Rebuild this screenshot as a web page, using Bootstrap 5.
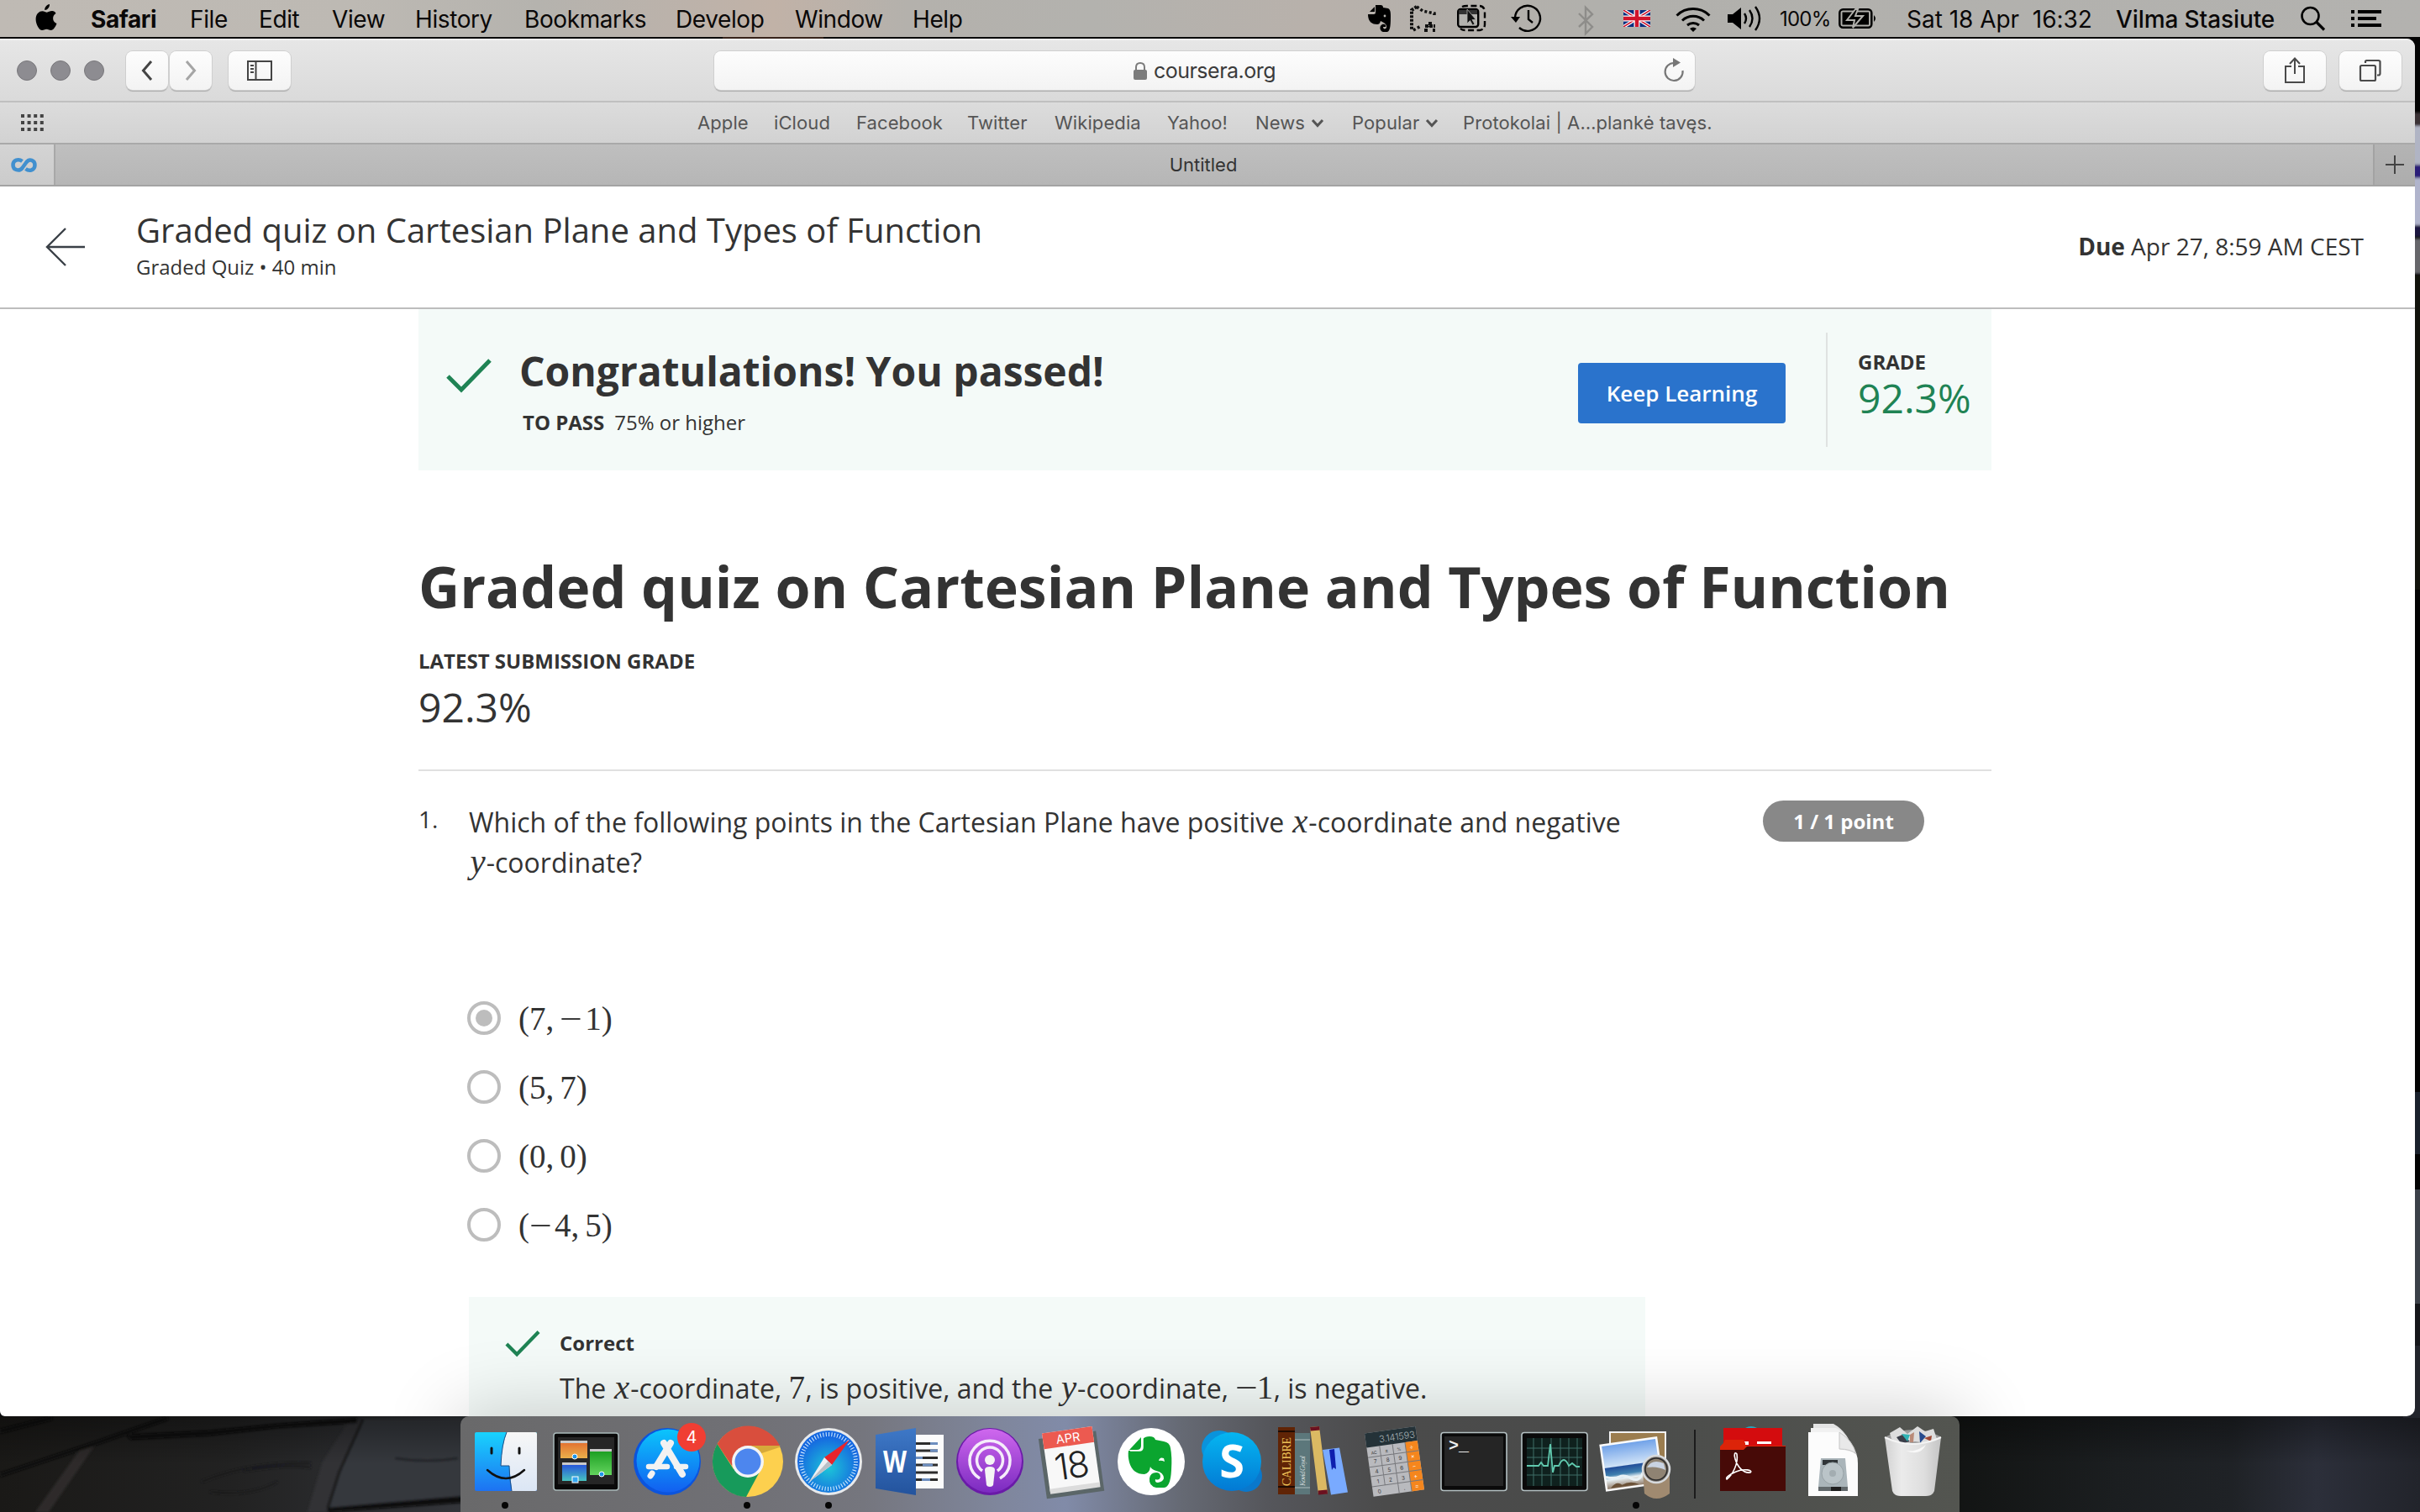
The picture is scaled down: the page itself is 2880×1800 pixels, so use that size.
<!DOCTYPE html>
<html lang="en">
<head>
<meta charset="utf-8">
<title>Graded quiz on Cartesian Plane and Types of Function</title>
<link href="https://cdn.jsdelivr.net/npm/bootstrap@5.3.0/dist/css/bootstrap.min.css" rel="stylesheet">
<style>
html,body{width:2880px;height:1800px;overflow:hidden}
body{background:#0c0d0f;font-family:"Open Sans",sans-serif;color:#333;position:relative;line-height:1.5}
svg{display:block;overflow:visible}
.sys{font-family:Inter,"Liberation Sans",sans-serif}
.wallpaper{position:absolute;inset:0;z-index:0}
/* menu bar */
.menubar{position:relative;z-index:2;height:44px;color:#0a0808;font-size:28px;line-height:46px;letter-spacing:-.4px;white-space:nowrap;
 background:linear-gradient(90deg,#bfbab4 0,#bdb9b3 420px,#b5b3ae 640px,#bcb2aa 820px,#c1b2a7 920px,#b4b1ac 1080px,#b3b2ae 1300px,#b8b1ab 1560px,#b1b0ac 1900px,#b3b2af 100%)}
.menus{display:grid;grid-template-columns:66px 118px 82px 87px 99px 130px 180px 142px 140px 100px;padding-left:42px}
.extras{display:grid;width:1252px;grid-template-columns:49px 57px 64px 80px 54px 62px 62px 62px 70px 81px 249px 220px 60px 82px}
.extras svg{margin-top:6px}
.clock{letter-spacing:-.02px}
.pct{font-size:24px;letter-spacing:-.8px}
/* browser window */
.win{position:relative;z-index:1;width:2874px;height:1640px;margin-top:2px;background:#fff;border-radius:0 10px 10px 6px;overflow:hidden}
.toolbar{height:76px;padding-left:20px;padding-right:16px;padding-top:2px;background:linear-gradient(#f4f4f4 0,#e6e6e6 3px,#dadada);border-bottom:2px solid #c0c0c0;position:relative}
.dot{width:24px;height:24px;border-radius:50%;background:#8d8c91;border:1px solid #78777b;margin-right:16px}
.tbtn{height:46px;border-radius:8px;background:linear-gradient(#fdfdfd,#f3f3f3);box-shadow:0 0 0 1px #cfcfcf,0 2px 1px #a9a9a9;display:flex;align-items:center;justify-content:center}
.urlbox{width:1167px;margin-left:504px;font-size:25px;color:#3b3b3b;position:relative;letter-spacing:-.5px;padding-top:2px}
.reload{position:absolute;right:13px;top:8px}
.favs{height:50px;background:linear-gradient(#dcdcdc,#d2d2d2);border-bottom:2px solid #a9a9a9;color:#555;font-size:22px;line-height:49px;white-space:nowrap}
.favgrid{display:grid;grid-template-columns:91px 98px 132px 104px 134px 105px 115px 132px 300px;margin-left:769px;letter-spacing:.1px}
.tabs{height:50px;background:linear-gradient(#bfbfbf,#b6b6b6);border-bottom:2px solid #a3a3a3;font-size:22px;color:#333}
.pin{width:66px;background:linear-gradient(#d4d4d4,#cbcbcb);border-right:2px solid #a8a8a8;padding-left:13px}
.newtab{width:50px;background:linear-gradient(#b4b4b4,#adadad);border-left:2px solid #a3a3a3}
.tabtitle{padding-right:26px}
/* page */
.qhead{height:146px;border-bottom:2px solid #bdbdbd;padding:0 61px 4px 54px}
.qtitle{font-size:40px;line-height:48px;margin:0;font-weight:400}
.t24{font-size:24px;line-height:34px}
.colmain{width:1872px;margin-left:498px}
.passed{height:192px;background:#f4faf8}
.passed h2{font-size:48px;line-height:64px;margin:0 0 12px;font-weight:700}
.keep{background:#2a73cc;border:0;border-radius:4px;color:#fff;font-size:26px;font-weight:600;width:247px;height:72px;margin:64px 0 0;padding:0;line-height:73px}
.vline{width:2px;height:136px;background:#dfe2e1;margin:28px 37px 0 48px}
.big{font-size:48px;line-height:56px}
.quiz-h1{font-size:68px;line-height:84px;font-weight:700;margin:96px 0 30px;white-space:nowrap}
.rule{height:2px;background:#e0e0e0;margin-top:46px}
.q32{font-size:32px;line-height:48px}
.num{width:60px;font-size:28px;line-height:44px}
.pts{width:192px;height:49px;border-radius:25px;background:#888;color:#fff;font-size:24px;font-weight:700;line-height:49px;text-align:center;margin-right:80px}
.mi{font-family:"Liberation Serif",serif;font-style:italic;font-size:41px;line-height:0;letter-spacing:1px;padding-left:1.5px}
.mn{font-family:"Liberation Serif",serif;font-size:39px;line-height:0;letter-spacing:.4px}
.minus{display:inline-block;transform:scaleX(1.22);transform-origin:0 50%;padding-right:8px}
.right-ans .minus{padding-right:3px}
.opt{height:82px;gap:21px}
.ring{width:40px;height:40px;border:4px solid #bdbdbd;border-radius:50%;display:flex;align-items:center;justify-content:center}
.ring i{width:20px;height:20px;border-radius:50%;background:#bdbdbd}
.opts{margin:120px 0 45px -2px}
.optmath{font-family:"Liberation Serif",serif;font-size:39px;line-height:44px;padding-top:1px}
.optmath b{font-weight:400;padding-right:7px}
.right-ans{width:1400px;height:200px;background:#f4faf8;margin-left:60px;padding:38px 0 0 43px}
/* dock */
.dock{position:absolute;z-index:3;left:548px;top:1686px;width:1784px;height:114px;border-radius:10px 10px 0 0;padding:6px 0 0 5px;
 background:linear-gradient(90deg,#69696a 0,#707075 330px,#75767e 480px,#7f869c 640px,#818ba8 720px,#656973 860px,#55565b 960px,#4b4b4b 1100px,#4a4b4a 1350px,#535550 100%)}
.dockshade{position:absolute;z-index:2;left:470px;top:1500px;width:1940px;height:186px;overflow:hidden}
.dockshade div{position:absolute;left:78px;top:186px;width:1784px;height:114px;box-shadow:0 0 90px 4px rgba(0,0,0,.2)}
.app{width:96.15px;height:108px;flex:none}
.app.on::after{content:"";display:block;width:8px;height:8px;border-radius:50%;background:#050505;margin:0 auto}
.sep{width:2px;height:82px;background:#1c1c1c;margin:10px 20px 0 21px}
</style>
</head>
<body>
<svg class="wallpaper" width="2880" height="1800" viewBox="0 0 2880 1800">
 <defs>
  <linearGradient id="wl"><stop offset="0" stop-color="#1a1917"/><stop offset=".5" stop-color="#222222"/><stop offset="1" stop-color="#34363b"/></linearGradient>
  <linearGradient id="wr"><stop offset="0" stop-color="#121413"/><stop offset=".35" stop-color="#1b1e20"/><stop offset=".6" stop-color="#1f2226"/><stop offset=".78" stop-color="#2c2f3a"/><stop offset="1" stop-color="#22242b"/></linearGradient>
  <linearGradient id="dk" x2="0" y2="1"><stop offset="0" stop-opacity=".35"/><stop offset=".5" stop-opacity="0"/></linearGradient>
  <filter id="sf"><feGaussianBlur stdDeviation="1.5"/></filter>
 </defs>
 <rect y="1686" width="560" height="114" fill="url(#wl)"/>
 <g filter="url(#sf)">
  <path d="M430 1690 L560 1690 L560 1785 L390 1797 L404 1756 Z" fill="#36383c"/>
  <path d="M95 1726 L112 1722 L58 1800 L42 1800 Z" fill="#2d2c2a"/>
  <path d="M414 1694 L432 1690 L404 1750 L388 1800 L366 1800 L384 1740 Z" fill="#303135"/>
  <path d="M0 1704 L62 1688 M0 1756 L120 1716 L200 1688" stroke="#0e0e0e" stroke-width="5" fill="none"/>
  <path d="M432 1690 L404 1752 L390 1796" stroke="#131415" stroke-width="3" fill="none"/>
  <path d="M150 1708 L250 1703 L330 1695 L425 1688 L425 1694 L330 1700 L250 1709 L155 1714Z M390 1795 L550 1781 L550 1789 L390 1800Z" fill="#080808"/>
  <path d="M240 1764 q60-25 130-22 M250 1776 q50 6 80-12 M290 1751 q50-8 80-4 M470 1736 q40 6 75 0" stroke="#18191a" stroke-width="2" fill="none"/>
 </g>
 <rect y="1686" width="560" height="114" fill="url(#dk)"/>
 <rect x="2320" y="1686" width="560" height="114" fill="url(#wr)"/>
 <rect x="2320" y="1686" width="560" height="114" fill="url(#dk)"/>
 <rect y="44" width="2880" height="3" fill="#0a0a0a"/>
 <rect x="860" y="44" width="120" height="3" fill="#38241b"/>
 <rect x="2860" y="44" width="20" height="1642" fill="#030303"/>
 <g filter="url(#sf)">
 <rect x="2870" y="134" width="14" height="16" fill="#3b3136"/>
 <rect x="2870" y="150" width="14" height="46" fill="#b0b4c4"/>
 <rect x="2870" y="196" width="14" height="16" fill="#2c1a78"/>
 <rect x="2870" y="212" width="14" height="56" fill="#b0b4cc"/>
 <rect x="2870" y="268" width="14" height="14" fill="#1a1440"/>
 <rect x="2870" y="284" width="14" height="42" fill="#66666a"/>
 </g>
 <rect x="2870" y="328" width="10" height="374" fill="#12130c"/>
 <rect x="2870" y="1300" width="10" height="74" fill="#1a212c"/>
 <rect x="2870" y="1416" width="10" height="136" fill="#3b4048"/>
 <rect x="2870" y="1552" width="10" height="50" fill="#15161a"/>
 <rect x="2860" y="1602" width="20" height="86" fill="#22242b"/>
</svg>

<nav class="menubar sys d-flex justify-content-between">
 <div class="menus">
  <svg width="26" height="34" viewBox="0 0 26 34" style="margin-top:4px"><path d="M17 1c.4 3.400-2.600 7-5.800 7C10.800 4.800 13.900 1.500 17 1zM24.500 12c-5 3-4.200 10 1 12.100-1.200 3.500-4 8-6.800 8-2.100 0-2.800-1.300-5.300-1.300s-3.300 1.300-5.300 1.300C4.600 32.100.6 25 .6 19c0-6.500 4-9.800 7.800-9.800 2.300 0 4 1.500 5.500 1.500 1.400 0 3.600-1.700 6.300-1.600 1.800.1 3.300.9 4.300 2.900z" fill="#000"/></svg>
  <b>Safari</b><span>File</span><span>Edit</span><span>View</span><span>History</span><span>Bookmarks</span><span>Develop</span><span>Window</span><span>Help</span>
 </div>
 <div class="extras">
  <svg width="28" height="32" viewBox="0 0 28 32"><path d="M9 0h6c2 0 3 1 3 3l6 1c2 1 3 3 3 9 0 8 0 18-4 19h-5c-4-1-5-7-1-9 3-1 5 1 4 3h-3c0 3 3 3 4 1 1-4-3-6-7-8-1 3-2 4-4 4-6 0-11-3-11-12h6c3 0 3-1 3-3z" fill="#000"/><path d="M2 8L8 2v6z" fill="#000"/><circle cx="20" cy="13" r="1.400" fill="#b3b2ae"/></svg>
  <svg width="34" height="32" viewBox="0 0 34 32" fill="none" stroke="#111"><path d="M9 2L3 6v24" stroke-width="4" stroke-dasharray="3 1.500"/><path d="M9 2l7 5 14 3v4M5 30l9-5" stroke-width="3.500" stroke-dasharray="3 2.500"/><path d="M18 30h4M28 30h3M19 25h12M25 20v6" stroke-width="4" stroke-dasharray="4 1"/></svg>
  <svg width="34" height="32" viewBox="0 0 34 32" fill="none" stroke="#000" stroke-width="2.400"><path d="M6 2q2-1 6-1h14q6 0 7 6v16q0 6-6 7H10q-4 0-6-2" stroke-dasharray="7 3.500"/><rect x="1.200" y="5" width="24" height="21" rx="3" fill="#b3b2ae"/><path d="M2 6h22v5H2z" fill="#333" stroke="none"/><path d="M12 5v17l3.500-3.500 3 5.500 2.500-1.500-3-5h4.500z" fill="#111" stroke="#b3b2ae" stroke-width=".8"/></svg>
  <svg width="38" height="32" viewBox="0 0 38 32" fill="none" stroke="#000" stroke-width="2.400"><path d="M5 15A15 15 0 1 1 10 27" /><path d="M21 6v11l5 4"/><path d="M0 14h11l-5 7z" fill="#000" stroke="none"/></svg>
  <svg width="19" height="36" viewBox="0 0 19 36" fill="none" stroke="#8e8d8a" stroke-width="2.400"><path d="M1 10l16 16-8 8V3l8 8L1 26"/></svg>
  <svg width="32" height="20" viewBox="0 0 32 20" style="margin-top:12px;overflow:hidden"><path d="M0 0h32v20H0z" fill="#0b2e80"/><path d="M0 0l32 20M32 0L0 20" stroke="#fff" stroke-width="4"/><path d="M0 0l32 20M32 0L0 20" stroke="#d0142c" stroke-width="1.500"/><path d="M16 0v20M0 10h32" stroke="#fff" stroke-width="7"/><path d="M16 0v20M0 10h32" stroke="#d0142c" stroke-width="4.500"/></svg>
  <svg width="42" height="30" viewBox="0 0 42 30" fill="none" stroke="#000" stroke-width="3"><path d="M1.500 12.500a28 28 0 0 1 39 0M8 18.500a19 19 0 0 1 26 0M14 24a11 11 0 0 1 14 0"/><path d="M17 28q4-3 8 0l-4 4z" fill="#000" stroke="none"/></svg>
  <svg width="42" height="32" viewBox="0 0 42 32" fill="none" stroke="#000" stroke-width="2.400"><path d="M0 11h6l10-8v26L6 21H0z" fill="#000" stroke="none"/><path d="M20 10q4 6 0 12M26 6q7 10 0 20M33 2q10 14 0 28"/></svg>
  <span class="pct">100%</span>
  <svg width="46" height="24" viewBox="0 0 46 24" style="margin-top:10px"><rect x="1.300" y="1.300" width="38" height="21.400" rx="4" fill="none" stroke="#000" stroke-width="2.500"/><rect x="4.500" y="4.500" width="31.600" height="15" fill="#000"/><path d="M42 8q4 4 0 8z"/><path d="M20 1L10 14h9l-2 9 12-14h-9l3-8z" fill="#000" stroke="#b2b1ad" stroke-width="2"/></svg>
  <span class="clock">Sat 18 Apr&nbsp; 16:32</span>
  <span class="fw-medium" style="letter-spacing:-.1px">Vilma Stasiute</span>
  <svg width="30" height="30" viewBox="0 0 30 30" fill="none" stroke="#000" stroke-width="2.600" style="margin-top:8px"><circle cx="11.500" cy="11" r="10"/><path d="M18.500 18l9.500 9.500" stroke-width="3.200"/></svg>
  <svg width="36" height="20" viewBox="0 0 36 20" style="margin-top:12px"><path d="M0 0h4v4H0zM8 0h28v4H8zM0 8h4v4H0zM8 8h22v4H8zM0 16h4v4H0zM8 16h28v4H8z"/></svg>
 </div>
</nav>

<main class="win">
 <div class="toolbar d-flex align-items-center sys">
  <span class="dot"></span><span class="dot"></span><span class="dot" style="margin-right:26px"></span>
  <div class="tbtn" style="width:50px"><svg width="12" height="22" viewBox="0 0 12 22" fill="none" stroke="#444" stroke-width="3"><path d="M11 0L1.500 11 11 22"/></svg></div>
  <div class="tbtn" style="width:50px;margin-left:2px"><svg width="12" height="22" viewBox="0 0 12 22" fill="none" stroke="#a5a5a5" stroke-width="3"><path d="M1 0l9.500 11L1 22"/></svg></div>
  <div class="tbtn" style="width:74px;margin-left:20px"><svg width="30" height="24" viewBox="0 0 30 24" fill="none" stroke="#444" stroke-width="2"><path d="M1 1h28v22H1zM10.500 1v22M4 6h4M4 10h4M4 14h4"/></svg></div>
  <div class="tbtn urlbox"><svg width="16" height="22" viewBox="0 0 16 22" class="me-2"><rect y="9" width="16" height="12" rx="2" fill="#7c7c7c"/><path d="M3 10V6q0-5 5-5t5 5v4" fill="none" stroke="#7c7c7c" stroke-width="2"/></svg>coursera.org
   <svg class="reload" width="24" height="28" viewBox="0 0 24 28" fill="none" stroke="#777" stroke-width="2.200"><path d="M12.500 6A10.500 10.500 0 1 0 22.500 15"/><path d="M11 0v11l9-5.500z" fill="#777" stroke="none"/></svg>
  </div>
  <div class="tbtn ms-auto" style="width:74px"><svg width="24" height="32" viewBox="0 0 24 32" fill="none" stroke="#4a4a4a" stroke-width="2"><path d="M8 11H1v19h22V11h-7M12 20V2M6 8l6-6.500L18 8"/></svg></div>
  <div class="tbtn" style="width:74px;margin-left:16px"><svg width="26" height="26" viewBox="0 0 26 26" fill="none" stroke="#4a4a4a" stroke-width="2.200"><rect x="1" y="7" width="18" height="18" rx="1.500"/><path d="M7 4V2.500Q7 1 8.500 1h14Q24.500 1 24.500 2.500v14q0 2-2 2H21"/></svg></div>
 </div>
 <div class="favs sys d-flex align-items-center">
  <svg width="36" height="20" viewBox="0 0 36 20" style="margin-left:25px"><path d="M0 2h27M0 10h27M0 18h27" stroke="#444" stroke-width="4" stroke-dasharray="4 3.600"/></svg>
  <div class="favgrid"><span>Apple</span><span>iCloud</span><span>Facebook</span><span>Twitter</span><span>Wikipedia</span><span>Yahoo!</span>
   <span class="d-flex align-items-center">News<svg width="14" height="9" viewBox="0 0 14 9" fill="none" stroke="#555" stroke-width="3" class="ms-2"><path d="M1 1l6 6.500L13 1"/></svg></span>
   <span class="d-flex align-items-center">Popular<svg width="14" height="9" viewBox="0 0 14 9" fill="none" stroke="#555" stroke-width="3" class="ms-2"><path d="M1 1l6 6.500L13 1"/></svg></span>
   <span>Protokolai | A…plankė tavęs.</span></div>
 </div>
 <div class="tabs sys d-flex">
  <div class="pin d-flex align-items-center"><svg width="31" height="17" viewBox="0 0 31 17" fill="none" stroke="#4190cf" stroke-width="4.500"><path d="M13.500 4C9 .5 2.500 2.500 2.500 8.500s7.500 8 11 3.500L18.500 5c3.500-4.500 10-2.500 10 3.500s-6.500 8-11 4.500"/></svg></div>
  <div class="tabtitle flex-grow-1 d-flex align-items-center justify-content-center">Untitled</div>
  <div class="newtab d-flex align-items-center justify-content-center"><svg width="22" height="22" viewBox="0 0 22 22" stroke="#444" stroke-width="2"><path d="M11 0v22M0 11h22"/></svg></div>
 </div>

 <header class="qhead d-flex align-items-center">
  <svg width="48" height="46" viewBox="0 0 48 46" fill="none" stroke="#3a4047" stroke-width="2.400" style="margin-top:4px"><path d="M47 23H2M24 1L2 23l22 22"/></svg>
  <div style="margin-left:60px"><h1 class="qtitle">Graded quiz on Cartesian Plane and Types of Function</h1><div class="t24" style="margin-top:3px">Graded Quiz • 40 min</div></div>
  <div class="ms-auto" style="font-size:28px;padding-top:2px"><b>Due</b> Apr 27, 8:59 AM CEST</div>
 </header>

 <div class="colmain">
  <section class="passed d-flex align-items-start">
   <svg width="54" height="42" viewBox="0 0 54 42" fill="none" stroke="#1f8354" stroke-width="5" style="margin:59px 33px 0 33px"><path d="M2 21l16 16L52 2"/></svg>
   <div style="padding-top:42px"><h2>Congratulations! You passed!</h2><div class="t24 ps-1"><b>TO PASS</b><span style="margin-left:12px">75% or higher</span></div></div>
   <button class="btn keep ms-auto">Keep Learning</button>
   <div class="vline"></div>
   <div style="padding-top:47px;width:159px;margin-left:-1px"><b class="d-block t24" style="line-height:32px">GRADE</b><div class="big" style="line-height:54px;color:#1f8354">92.3%</div></div>
  </section>

  <h1 class="quiz-h1">Graded quiz on Cartesian Plane and Types of Function</h1>
  <b class="d-block t24">LATEST SUBMISSION GRADE</b>
  <div class="big" style="margin-top:10px">92.3%</div>
  <div class="rule"></div>

  <section class="d-flex" style="margin-top:35px">
   <div class="num">1.</div>
   <div class="q32" style="width:1400px;padding-top:2px">Which of the following points in the Cartesian Plane have positive <span class="mi">x</span>-coordinate and negative<br><span class="mi">y</span>-coordinate?</div>
   <div class="pts ms-auto">1 / 1 point</div>
  </section>
  <div class="opts" style="padding-left:60px">
   <div class="opt d-flex align-items-center"><span class="ring"><i></i></span><span class="optmath">(7<b>,</b><span class="minus">−</span>1)</span></div>
   <div class="opt d-flex align-items-center"><span class="ring"></span><span class="optmath">(5<b>,</b>7)</span></div>
   <div class="opt d-flex align-items-center"><span class="ring"></span><span class="optmath">(0<b>,</b>0)</span></div>
   <div class="opt d-flex align-items-center"><span class="ring"></span><span class="optmath">(<span class="minus">−</span>4<b>,</b>5)</span></div>
  </div>
  <div class="right-ans d-flex align-items-start">
   <svg width="42" height="32" viewBox="0 0 54 42" fill="none" stroke="#1f8354" stroke-width="5.500" style="margin:2px 23px 0 0"><path d="M2 21l16 16L52 2"/></svg>
   <div><b class="d-block t24">Correct</b><div class="q32" style="margin-top:13px">The <span class="mi">x</span>-coordinate, <span class="mn">7</span>, is positive, and the <span class="mi">y</span>-coordinate, <span class="mn"><span class="minus">−</span>1</span>, is negative.</div></div>
  </div>
 </div>
</main>

<div class="dockshade"><div></div></div>
<footer class="dock d-flex">
 <div class="app on"><svg width="96" height="96" viewBox="0 0 96 96">
  <defs><linearGradient id="fi" x2="0" y2="1"><stop offset="0" stop-color="#19d3fd"/><stop offset="1" stop-color="#1d72f2"/></linearGradient><linearGradient id="fw" x2="0" y2="1"><stop offset="0" stop-color="#f7f7f7"/><stop offset="1" stop-color="#dbe6f5"/></linearGradient></defs>
  <rect x="12" y="13" width="74" height="70" rx="2" fill="url(#fi)"/><path d="M50 13h34q2 0 2 2v66q0 2-2 2H56q-1-12-3-30H43q1-24 7-40z" fill="url(#fw)"/><path d="M50 13q-6 14-7 40h10q0 14 3 30" fill="none" stroke="#1c4f86" stroke-width="1"/><path d="M32 32v6M65 32v6" stroke="#111" stroke-width="3" stroke-linecap="round"/><path d="M27 58q22 20 44 0" fill="none" stroke="#111" stroke-width="2.500" stroke-linecap="round"/></svg></div>
 <div class="app"><svg width="96" height="96" viewBox="0 0 96 96">
  <defs><linearGradient id="mo" x2="0" y2="1"><stop offset="0" stop-color="#e1692c"/><stop offset="1" stop-color="#eab04c"/></linearGradient><linearGradient id="mb" x2="0" y2="1"><stop offset="0" stop-color="#2345dd"/><stop offset="1" stop-color="#47c3c0"/></linearGradient><linearGradient id="mg" x2="0" y2="1"><stop offset="0" stop-color="#159a1d"/><stop offset="1" stop-color="#63d35d"/></linearGradient></defs>
  <rect x="10" y="14" width="77" height="68" rx="3" fill="#0a0a0a" stroke="#a9b9b9" stroke-width="1.500"/><rect x="15" y="19" width="67" height="56" fill="#262626"/>
  <rect x="18" y="23" width="32" height="21" fill="url(#mo)"/><path d="M18 23h32v3H18z" fill="#c9c9c9"/><rect x="20" y="49" width="29" height="22" fill="url(#mb)"/><path d="M20 49h29v3H20z" fill="#c9c9c9"/><rect x="53" y="33" width="26" height="31" fill="url(#mg)"/><path d="M53 33h26v3H53z" fill="#c9c9c9"/>
  <circle cx="35" cy="42" r="3" fill="#1f95e8" stroke="#fff"/><circle cx="67" cy="63" r="3" fill="#1f95e8" stroke="#fff"/><rect x="32" y="66" width="7" height="7" fill="#35a5f0" stroke="#fff"/></svg></div>
 <div class="app"><svg width="96" height="96" viewBox="0 0 96 96">
  <defs><linearGradient id="as" x2="0" y2="1"><stop offset="0" stop-color="#0bc5fc"/><stop offset="1" stop-color="#125ff0"/></linearGradient></defs>
  <circle cx="49" cy="48" r="40" fill="#0b54dd"/><circle cx="50" cy="47" r="37.500" fill="url(#as)"/>
  <g stroke="#f2f2f2" stroke-width="8" stroke-linecap="round"><path d="M53 26L36 54M45 26L67 63"/><path d="M27 54h22M60 54h11" stroke-width="6.500"/><path d="M31 62l-2 3" stroke-width="7"/></g>
  <circle cx="78" cy="19" r="17" fill="#f03e33"/><text x="78" y="26" font-family="Inter" font-size="20" fill="#fff" text-anchor="middle">4</text></svg></div>
 <div class="app on"><svg width="96" height="96" viewBox="0 0 96 96">
  <circle cx="49" cy="48" r="42" fill="#fdd04e"/><path d="M12.600 27A42 42 0 0 1 87 29H49L30 53z" fill="#d94e3d"/><path d="M12.600 27A42 42 0 0 0 47 90L62 62 49 48 32 57z" fill="#179a5b"/><path d="M49 29h38.500l-1 2-24 8z" fill="#d6a93a"/><circle cx="49" cy="48" r="19" fill="#f4f4f4"/><circle cx="49" cy="48" r="15.500" fill="#4d86ee"/></svg></div>
 <div class="app on"><svg width="96" height="96" viewBox="0 0 96 96">
  <defs><radialGradient id="sa" cy=".6"><stop offset="0" stop-color="#1cc6d8"/><stop offset="1" stop-color="#1668e0"/></radialGradient></defs>
  <circle cx="48" cy="48" r="40" fill="#e8eaec"/><circle cx="48" cy="48" r="37" fill="url(#sa)"/><circle cx="48" cy="48" r="32.500" fill="none" stroke="#d9efff" stroke-width="5" stroke-dasharray="1 2.400"/><path d="M73 22L43 43l9 9z" fill="#e8242b"/><path d="M25 72l18-29 9 9z" fill="#eef1f4"/><path d="M25 72l27-20-4.500-4.500z" fill="#b9bfc6"/></svg></div>
 <div class="app"><svg width="96" height="96" viewBox="0 0 96 96">
  <defs><linearGradient id="wo" x2="0" y2="1"><stop offset="0" stop-color="#3e78c7"/><stop offset="1" stop-color="#23539d"/></linearGradient></defs>
  <path d="M50 16h39v64H50z" fill="#fbfbfb"/><path d="M56 26.500h26M56 35h26M56 43.500h26M56 52h26M56 61h26M56 69.500h26" stroke="#2c2c2c" stroke-width="3"/><path d="M73 26.500h9M73 35h9M56 43.500h8M64 52h12M73 69.500h-10" stroke="#6d8ebf" stroke-width="3"/><path d="M8 16l48-8v80L8 80z" fill="url(#wo)"/><text x="31" y="61" font-family="Open Sans" font-weight="700" font-size="36" fill="#fff" text-anchor="middle" textLength="28" lengthAdjust="spacingAndGlyphs">W</text></svg></div>
 <div class="app"><svg width="96" height="96" viewBox="0 0 96 96">
  <defs><linearGradient id="po" x2="0" y2="1"><stop offset="0" stop-color="#cf68ee"/><stop offset="1" stop-color="#7b2bc0"/></linearGradient></defs>
  <circle cx="48" cy="48" r="40" fill="#6a1aa8"/><circle cx="48" cy="47" r="38" fill="url(#po)"/><g fill="none" stroke="#f5ecfa" stroke-width="3.500"><path d="M36 68a24 24 0 1 1 24 0"/><path d="M39 59a15.500 15.500 0 1 1 18 0"/></g><circle cx="48" cy="46" r="6" fill="#f5f5f5"/><path d="M42 58q0-4 6-4t6 4l-2 18q-1 2-4 2t-4-2z" fill="#f5f5f5"/></svg></div>
 <div class="app"><svg width="96" height="96" viewBox="0 0 96 96"><g transform="rotate(-8 48 48)">
  <path d="M14 16h69v72H14z" fill="#5b6668"/><path d="M19 10h60v70H19z" fill="#f8f8f8"/><path d="M19 10h60v19H19z" fill="#ec5a50"/><path d="M19 77h60v6H19z" fill="#dcdcdc"/><text x="49" y="25" font-family="Inter" font-size="14.500" fill="#fff" text-anchor="middle">APR</text><text x="48" y="68" font-family="Inter" font-weight="300" font-size="43" fill="#222" text-anchor="middle" letter-spacing="-2">18</text></g></svg></div>
 <div class="app"><svg width="96" height="96" viewBox="0 0 96 96"><circle cx="48" cy="48" r="40" fill="#fff"/>
  <path d="M38 21q3-3 8-3 6 0 7 4l10 2q7 1 8 8 2 10 1 26-1 22-10 21H54q-9-2-8-11 1-7 8-7 5 0 5 5-1 5-6 3-1 4 3 4 6-1 7-5 0-7-9-9-6-2-7-5-1 8-7 9-14 0-18-14-2-8-1-14h13q4 0 4-4z" fill="#0ba52f"/><path d="M22 34l14-15v10q0 5-5 5z" fill="#0ba52f"/><path d="M23 35h11q4 0 4-4V20" fill="none" stroke="#fff" stroke-width="1.500"/><path d="M57 47q1-5 6-3l1 4q-4-2-7-1z" fill="#fff"/></svg></div>
 <div class="app"><svg width="96" height="96" viewBox="0 0 96 96">
  <defs><linearGradient id="sk" x2="0" y2="1"><stop offset="0" stop-color="#05b6f1"/><stop offset="1" stop-color="#0379d4"/></linearGradient></defs>
  <circle cx="33" cy="32" r="21" fill="#0a93dc"/><circle cx="65" cy="65" r="19" fill="#0a78cc"/><circle cx="48" cy="48" r="35" fill="url(#sk)"/><text x="48" y="67" font-family="Open Sans" font-weight="700" font-size="54" fill="#fff" text-anchor="middle">S</text></svg></div>
 <div class="app"><svg width="96" height="96" viewBox="0 0 96 96">
  <path d="M7 7h20v80H7z" fill="#602406"/><path d="M7 12h20M7 78h20" stroke="#1f0b02" stroke-width="2"/><path d="M27 14h18v73H27z" fill="#5c777b"/><path d="M27 22h18M27 79h18" stroke="#93a7a8" stroke-width="1.500"/><path d="M45 7l11-1 10 80-11 1z" fill="#dcb963"/><path d="M45 7l11-1 .7 4.500-11 1zM54.500 82.500l11-1 .5 5-11 1z" fill="#6b1120"/><path d="M60 34l20-2.500 10 53-20 3z" fill="#79aaff"/><path d="M68 34l6-1 2 24-3-2-2 3z" fill="#0e1fae"/>
  <text transform="translate(22 77) rotate(-90)" font-family="Liberation Serif" font-size="14" fill="#ecc057" textLength="58">CALIBRE</text><text transform="translate(39 77) rotate(-90)" font-family="Liberation Serif" font-style="italic" font-size="8.500" fill="#d0dada" textLength="36">Kovid Goyal</text></svg></div>
 <div class="app"><svg width="96" height="96" viewBox="0 0 96 96"><g transform="rotate(-8 48 48)">
  <path d="M18 10h61v76H18z" fill="#b9babe"/><path d="M18 10h61v17H18z" fill="#243238"/><path d="M64 27h15v59H64z" fill="#f5861d"/><path d="M18 39h61M18 50.500h61M18 62h61M18 74h61M33.500 27v47M49 27v59M64 27v59" stroke="#77787c" stroke-width="1"/>
  <text x="77" y="23" font-family="Inter" font-weight="300" font-size="11" fill="#a4b0b3" text-anchor="end" textLength="43">3.141593</text>
  <g font-family="Inter" font-size="6.500" fill="#3c3c40" text-anchor="middle"><text x="26" y="36" font-size="5">AC</text><text x="41" y="36">±</text><text x="56" y="36" font-size="5">%</text><text x="26" y="47">7</text><text x="41" y="47">8</text><text x="56" y="47">9</text><text x="26" y="59">4</text><text x="41" y="59">5</text><text x="56" y="59">6</text><text x="26" y="71">1</text><text x="41" y="71">2</text><text x="56" y="71">3</text><text x="26" y="83">0</text><text x="56" y="83">.</text></g>
  <g font-family="Inter" font-size="7" fill="#fff" text-anchor="middle"><text x="71" y="36">÷</text><text x="71" y="47">×</text><text x="71" y="59">−</text><text x="71" y="71">+</text><text x="71" y="83">=</text></g></g></svg></div>
 <div class="app"><svg width="96" height="96" viewBox="0 0 96 96"><rect x="8" y="13.500" width="78" height="69" rx="3" fill="#0a0a0a" stroke="#b4c0c2" stroke-width="1.600"/><rect x="12" y="18" width="70" height="59" fill="#252525"/><text x="17" y="35" font-family="Liberation Mono" font-weight="700" font-size="20" fill="#eee">&gt;_</text></svg></div>
 <div class="app"><svg width="96" height="96" viewBox="0 0 96 96"><rect x="8" y="13.500" width="78" height="69" rx="3" fill="#0a0a0a" stroke="#b4c0c2" stroke-width="1.600"/><rect x="14" y="20" width="66" height="57" fill="#0f211e"/><path d="M14 32h66M14 43h66M14 64h66M22 20v57M32 20v57M43 20v57M54 20v57M64 20v57M74 20v57" stroke="#3f6f66" stroke-width="1"/><path d="M14 53h14l3-4 3 4h5l3-26 3 34 2-8h5q6-14 12 0l4-3 5 4h4" fill="none" stroke="#60c9ae" stroke-width="1.800"/></svg></div>
 <div class="app on"><svg width="96" height="96" viewBox="0 0 96 96">
  <defs><linearGradient id="sky" x2="0" y2="1"><stop offset="0" stop-color="#6c9fe8"/><stop offset=".5" stop-color="#cfe2f7"/><stop offset=".52" stop-color="#234f9a"/><stop offset=".68" stop-color="#3f7fae"/><stop offset=".78" stop-color="#eaf3f6"/><stop offset="1" stop-color="#87705b"/></linearGradient></defs>
  <rect x="17" y="13" width="66" height="60" fill="#9b7d4f" stroke="#f1f1f1" stroke-width="2"/><g transform="rotate(-8 42 50)"><rect x="9" y="24" width="67" height="54" fill="url(#sky)" stroke="#fafafa" stroke-width="2.500"/><path d="M10 62q10 4 16 2t14 4 14-4 21 2" fill="none" stroke="#e9f2f6" stroke-width="3"/><path d="M14 76q8-8 14-2 10-4 20 2z" fill="#6b5238"/></g><path d="M56 60h32v26q-16 12-30 0z" fill="#a08a70"/><circle cx="72" cy="57" r="16" fill="#76706a" stroke="#d7dadd" stroke-width="2.500"/><circle cx="72" cy="57" r="13" fill="#8f8373" stroke="#2b2b2b" stroke-width="1.500"/><path d="M61 55q6-11 20-5l2 8q-10-5-22-3z" fill="#c9d3e2"/></svg></div>
 <div class="sep"></div>
 <div class="app"><svg width="96" height="96" viewBox="0 0 96 96"><path d="M39 8q7-4 14 0z" fill="#27a6bd"/><path d="M13 8h70v30H13z" fill="#d40c0e"/><path d="M38 24h5v4h-5zM53 24h17v3H53z" fill="#fff"/><path d="M9 30l4-4 2-4h22l2 4v3l48 0v10H9z" fill="#dc2409"/><path d="M9 34h28l4-4h46v53H9z" fill="#470a07"/><path d="M17 69c7-5 14-19 12-30-2-3-4 0-2 6 3 10 10 17 18 16 4-3-8-5-17-1-7 3-13 7-11 9z" fill="none" stroke="#fff" stroke-width="1.600"/></svg></div>
 <div class="app"><svg width="96" height="96" viewBox="0 0 96 96"><path d="M24 3h24q18 10 24 34v42H24z" fill="#e4e4e4"/><path d="M21 8h30q16 8 22 34v40H21z" fill="#f1f1f1"/><path d="M18 13h37v20l20 5q2 5 2 12v39H18z" fill="#fcfcfc"/><path d="M55 13l0 20q14 0 20 6-4-16-20-26z" fill="#e9e9e9" stroke="#c6c6c6"/><path d="M33 44h29l3 34H30z" fill="#aab5ba"/><path d="M35 46h18v6H35z" fill="#303538"/><circle cx="47" cy="62" r="13" fill="#bac4c8" stroke="#98a3a7"/><circle cx="47" cy="62" r="4" fill="#a3adb1"/><path d="M30 78h35v5H30z" fill="#62696c"/><path d="M45 78h12v5H45z" fill="#1f1f1f"/></svg></div>
 <div class="app"><svg width="96" height="96" viewBox="0 0 96 96">
  <defs><linearGradient id="tr"><stop offset="0" stop-color="#d2d2d2"/><stop offset=".3" stop-color="#ebebeb"/><stop offset=".7" stop-color="#dedede"/><stop offset="1" stop-color="#c4c4c4"/></linearGradient></defs>
  <path d="M15 18q32-16 64 0v8H15z" fill="#9b9b9b"/><path d="M19 14l12-7 9 8 12-9 9 6 10-3 4 12-12 5-14-2-16 3-12-6z" fill="#ddd"/><path d="M27 19l7-3 9 8-10 3z" fill="#3b3f4a"/><path d="M33 15l10 1-3 8z" fill="#2fb3b5"/><path d="M43 16l5-3-1 12-4 0z" fill="#b98a78"/><path d="M54 12l8 6-7 8z" fill="#274b8d"/><path d="M60 20l9-3-1 7z" fill="#a14b38"/>
  <path d="M13 19q33 16 67 0l-8 64q-2 6-10 6H32q-8 0-10-6z" fill="url(#tr)"/><path d="M13 19q33 16 67 0" fill="none" stroke="#f4f4f4" stroke-width="2"/><path d="M38 35q12 2 24-7-7 14-24 7z" fill="#f8f8f8"/></svg></div>
</footer>
<script src="https://cdn.jsdelivr.net/npm/bootstrap@5.3.0/dist/js/bootstrap.bundle.min.js"></script>
</body>
</html>
